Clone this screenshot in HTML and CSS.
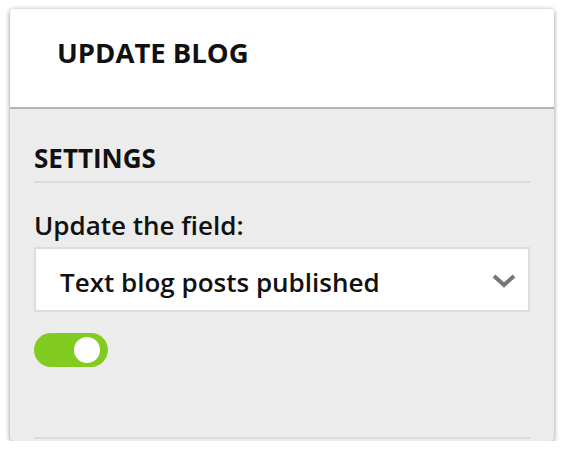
FILE: index.html
```html
<!DOCTYPE html>
<html>
<head>
<meta charset="utf-8">
<link rel="stylesheet" href="styles.css">
</head>
<body>
<div class="card">
  <div class="card-header">
    <h1 class="title">UPDATE BLOG</h1>
  </div>
  <div class="card-body">
    <h2 class="section-title">SETTINGS</h2>
    <label class="field-label">Update the field:</label>
    <div class="select">
      <span class="select-text">Text blog posts published</span>
      <svg class="chevron" width="24" height="14" viewBox="0 0 24 14"><path d="M2 2 L12 11 L22 2" fill="none" stroke="#767676" stroke-width="4" stroke-linecap="butt" stroke-linejoin="miter"/></svg>
    </div>
    <div class="toggle"><span class="knob"></span></div>
    <div class="spacer"></div>
    <div class="bottom-rule"></div>
  </div>
</div>
</body>
</html>
```
FILE: styles.css
```css
html, body { margin: 0; padding: 0; background: #fff; }
body { font-family: "Open Sans", "Noto Sans", sans-serif; color: #111; }
.card {
  margin: 9px 10px 0 10px;
  width: 544px;
  height: 432px;
  border-radius: 4px;
  box-shadow: 0 1px 5px rgba(0,0,0,0.45);
  background: #ececec;
  overflow: hidden;
  display: flex;
  flex-direction: column;
}
.card-header {
  background: #fff;
  height: 98px;
  flex: none;
  border-bottom: 2px solid #b3b3b3;
  padding-left: 47px;
}
.title {
  margin: 0;
  padding-top: 26px;
  font-size: 27.5px;
  line-height: 36px;
  font-weight: 700;
  color: #111;
}
.card-body {
  flex: 1;
  padding: 0 24px;
  display: flex;
  flex-direction: column;
}
.section-title {
  margin: 0;
  padding-top: 33px;
  padding-bottom: 7px;
  font-size: 26px;
  line-height: 32px;
  font-weight: 700;
  border-bottom: 2px solid #dcdcdc;
}
.field-label {
  margin-top: 26px;
  font-size: 26px;
  line-height: 32px;
  font-weight: 600;
}
.select {
  margin-top: 6px;
  height: 61px;
  flex: none;
  background: #fff;
  border: 2px solid #dcdcdc;
  display: flex;
  align-items: center;
  justify-content: space-between;
  padding: 5px 12px 0 24px;
  box-sizing: content-box;
  height: 56px;
}
.select-text {
  font-size: 26px;
  font-weight: 600;
  color: #111;
}
.chevron { display: block; margin-top: -3px; }
.toggle {
  margin-top: 21px;
  width: 74px;
  height: 34px;
  flex: none;
  border-radius: 17px;
  background: #82cc22;
  position: relative;
}
.knob {
  position: absolute;
  top: 4px;
  left: 40px;
  width: 26px;
  height: 26px;
  border-radius: 50%;
  background: #fff;
}
.spacer { flex: 1; }
.bottom-rule {
  height: 2px;
  background: #dcdcdc;
  margin-bottom: 2px;
}
```
